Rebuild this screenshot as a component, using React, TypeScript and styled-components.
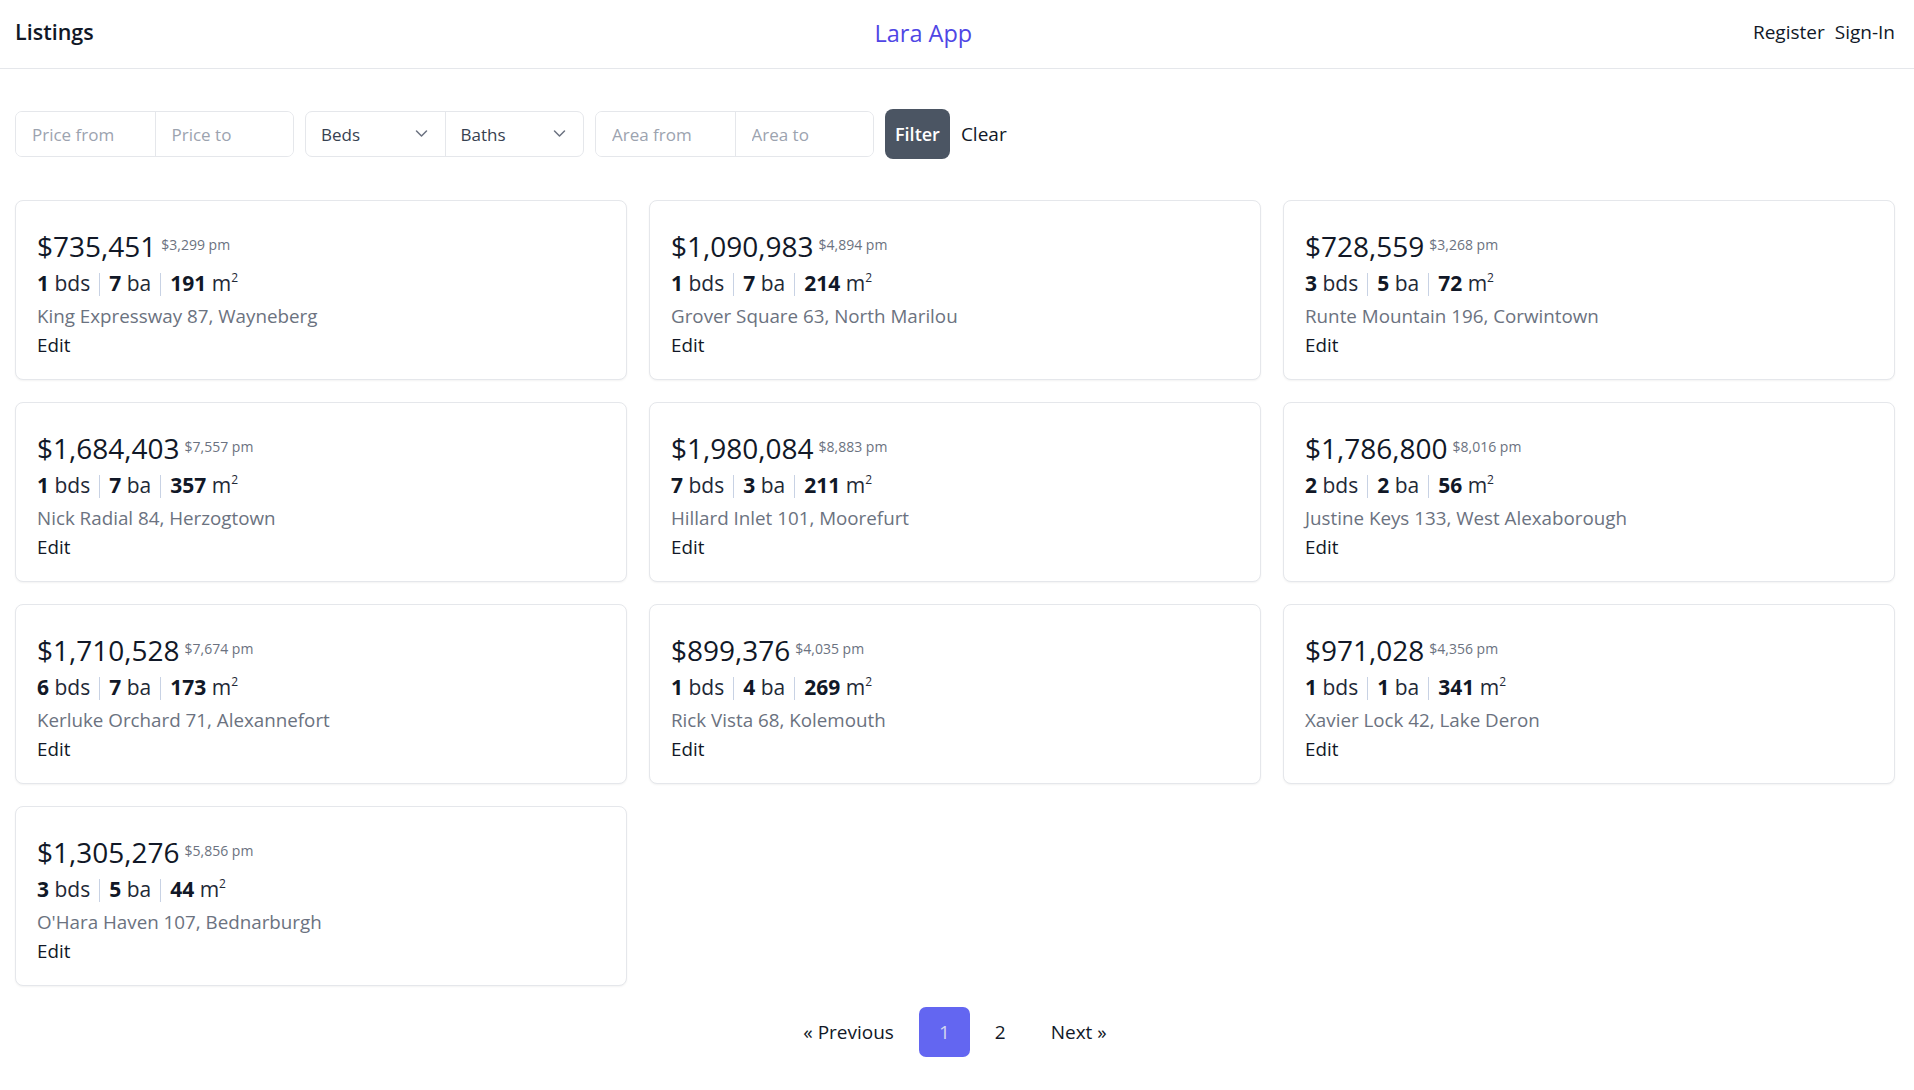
import React from "react";
import styled, { createGlobalStyle } from "styled-components";

const GlobalStyle = createGlobalStyle`
  * { box-sizing: border-box; }
  html, body { margin: 0; padding: 0; background: #ffffff; }
  body {
    font-family: "Open Sans", "Noto Sans", sans-serif;
    color: #1f2937;
    -webkit-font-smoothing: antialiased;
  }
  input, select, button { font-family: inherit; }
`;

const Header = styled.header`
  height: 69px;
  padding: 0 19px 0 15px;
  display: flex;
  align-items: center;
  justify-content: space-between;
  border-bottom: 1px solid #e5e7eb;
`;

const Title = styled.div`
  font-size: 21.5px;
  font-weight: 600;
  color: #111827;
  margin-top: -5px;
`;

const Brand = styled.a`
  font-size: 23.5px;
  color: #4f46e5;
  text-decoration: none;
  margin-top: -3px;
`;

const Nav = styled.nav`
  display: flex;
  gap: 10px;
  font-size: 19px;
  color: #111827;
  margin-top: -4px;
`;

const NavLink = styled.a`
  color: inherit;
  text-decoration: none;
`;

const Main = styled.main`
  padding: 40px 19px 20px 15px;
`;

const FilterBar = styled.form`
  display: flex;
  align-items: center;
  gap: 11px;
  height: 50px;
`;

const Group = styled.div`
  display: flex;
  height: 46px;
  border: 1px solid #e5e7eb;
  border-radius: 7px;
  overflow: hidden;
`;

const Field = styled.input`
  width: 138.5px;
  height: 100%;
  border: none;
  outline: none;
  padding: 0 16px;
  font-size: 17px;
  color: #374151;
  background: #fff;
  & + & { border-left: 1px solid #e5e7eb; }
  &::placeholder { color: #9ca3af; }
`;

const SelectBox = styled.div`
  position: relative;
  width: 138.5px;
  height: 100%;
  display: flex;
  align-items: center;
  padding: 0 15px;
  font-size: 17px;
  color: #374151;
  & + & { border-left: 1px solid #e5e7eb; }
`;

const Chevron = styled.svg`
  position: absolute;
  right: 17px;
  top: 50%;
  margin-top: -5px;
  width: 13px;
  height: 9px;
`;

const FilterButton = styled.button`
  height: 50px;
  padding: 0 10px;
  border: none;
  border-radius: 8px;
  background: #4b5563;
  color: #ffffff;
  font-size: 18px;
  font-weight: 600;
`;

const ClearButton = styled.button`
  border: none;
  background: none;
  padding: 0;
  font-size: 19px;
  color: #111827;
`;

const Grid = styled.section`
  margin-top: 41px;
  display: grid;
  grid-template-columns: repeat(3, 1fr);
  gap: 22px 22px;
`;

const Card = styled.article`
  height: 180px;
  padding: 25px 21px 0;
  border: 1px solid #e5e7eb;
  border-radius: 8px;
  box-shadow: 0 1px 2px rgba(0, 0, 0, 0.05);
  background: #fff;
`;

const PriceRow = styled.div`
  display: flex;
  align-items: center;
  height: 39px;
`;

const Price = styled.span`
  font-size: 28px;
  color: #111827;
`;

const Monthly = styled.span`
  margin-left: 5px;
  font-size: 14px;
  color: #6b7280;
  margin-top: -2px;
`;

const Specs = styled.div`
  height: 37px;
  line-height: 37px;
  font-size: 21px;
  color: #1f2937;
`;

const Strong = styled.b`
  font-weight: 700;
  color: #111827;
`;

const Sep = styled.span`
  display: inline-block;
  width: 1px;
  height: 23px;
  margin: 0 9px;
  vertical-align: -5px;
  background: #c8d2e4;
`;

const Sup = styled.sup`
  font-size: 12px;
  vertical-align: 9px;
  line-height: 0;
`;

const Address = styled.div`
  height: 29px;
  line-height: 29px;
  font-size: 18.8px;
  color: #6b7280;
`;

const EditLink = styled.a`
  display: block;
  height: 29px;
  line-height: 29px;
  font-size: 18.8px;
  color: #111827;
  text-decoration: none;
`;

const Pager = styled.nav`
  margin-top: 21px;
  display: flex;
  justify-content: center;
  gap: 5px;
`;

const PageItem = styled.a<{ $active?: boolean }>`
  height: 50px;
  padding: 0 20px;
  display: flex;
  align-items: center;
  border-radius: 7px;
  font-size: 19px;
  text-decoration: none;
  color: ${(p) => (p.$active ? "#d4d6ee" : "#111827")};
  background: ${(p) => (p.$active ? "#6366f1" : "transparent")};
`;

type Listing = {
  price: string;
  monthly: string;
  beds: number;
  baths: number;
  area: number;
  address: string;
};

const listings: Listing[] = [
  { price: "$735,451", monthly: "$3,299 pm", beds: 1, baths: 7, area: 191, address: "King Expressway 87, Wayneberg" },
  { price: "$1,090,983", monthly: "$4,894 pm", beds: 1, baths: 7, area: 214, address: "Grover Square 63, North Marilou" },
  { price: "$728,559", monthly: "$3,268 pm", beds: 3, baths: 5, area: 72, address: "Runte Mountain 196, Corwintown" },
  { price: "$1,684,403", monthly: "$7,557 pm", beds: 1, baths: 7, area: 357, address: "Nick Radial 84, Herzogtown" },
  { price: "$1,980,084", monthly: "$8,883 pm", beds: 7, baths: 3, area: 211, address: "Hillard Inlet 101, Moorefurt" },
  { price: "$1,786,800", monthly: "$8,016 pm", beds: 2, baths: 2, area: 56, address: "Justine Keys 133, West Alexaborough" },
  { price: "$1,710,528", monthly: "$7,674 pm", beds: 6, baths: 7, area: 173, address: "Kerluke Orchard 71, Alexannefort" },
  { price: "$899,376", monthly: "$4,035 pm", beds: 1, baths: 4, area: 269, address: "Rick Vista 68, Kolemouth" },
  { price: "$971,028", monthly: "$4,356 pm", beds: 1, baths: 1, area: 341, address: "Xavier Lock 42, Lake Deron" },
  { price: "$1,305,276", monthly: "$5,856 pm", beds: 3, baths: 5, area: 44, address: "O'Hara Haven 107, Bednarburgh" },
];

const ChevronIcon = () => (
  <Chevron viewBox="0 0 13 9" fill="none">
    <path d="M1.5 2l5 5 5-5" stroke="#6b7280" strokeWidth="1.5" strokeLinecap="round" strokeLinejoin="round" />
  </Chevron>
);

export default function App() {
  return (
    <>
      <GlobalStyle />
      <Header>
        <Title>Listings</Title>
        <Brand href="#">Lara App</Brand>
        <Nav>
          <NavLink href="#">Register</NavLink>
          <NavLink href="#">Sign-In</NavLink>
        </Nav>
      </Header>
      <Main>
        <FilterBar onSubmit={(e) => e.preventDefault()}>
          <Group>
            <Field placeholder="Price from" />
            <Field placeholder="Price to" />
          </Group>
          <Group>
            <SelectBox>
              Beds
              <ChevronIcon />
            </SelectBox>
            <SelectBox>
              Baths
              <ChevronIcon />
            </SelectBox>
          </Group>
          <Group>
            <Field placeholder="Area from" />
            <Field placeholder="Area to" />
          </Group>
          <FilterButton type="submit">Filter</FilterButton>
          <ClearButton type="button">Clear</ClearButton>
        </FilterBar>
        <Grid>
          {listings.map((l) => (
            <Card key={l.address}>
              <PriceRow>
                <Price>{l.price}</Price>
                <Monthly>{l.monthly}</Monthly>
              </PriceRow>
              <Specs>
                <Strong>{l.beds}</Strong> bds
                <Sep />
                <Strong>{l.baths}</Strong> ba
                <Sep />
                <Strong>{l.area}</Strong> m<Sup>2</Sup>
              </Specs>
              <Address>{l.address}</Address>
              <EditLink href="#">Edit</EditLink>
            </Card>
          ))}
        </Grid>
        <Pager>
          <PageItem href="#">« Previous</PageItem>
          <PageItem href="#" $active>1</PageItem>
          <PageItem href="#">2</PageItem>
          <PageItem href="#">Next »</PageItem>
        </Pager>
      </Main>
    </>
  );
}
